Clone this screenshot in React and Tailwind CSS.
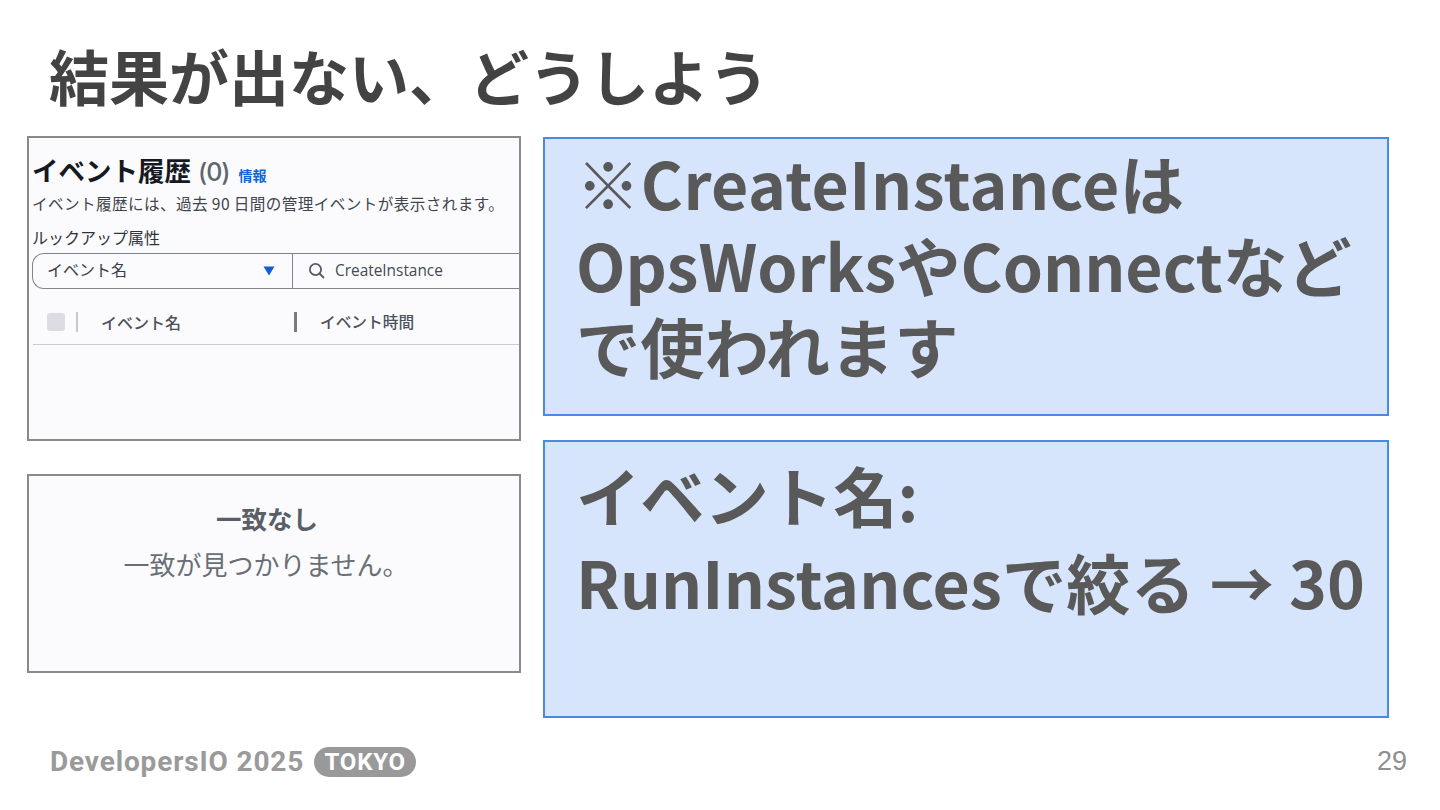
import React from 'react'

const jp = "font-['Noto_Sans_CJK_JP','Noto_Sans',sans-serif]"

const Triangle = () => (
  <svg width="12" height="10" viewBox="0 0 12 10" className="shrink-0">
    <path d="M0.5 0.5 H11.5 L6 9.5 Z" fill="#0e5fd0" />
  </svg>
)

const Search = () => (
  <svg width="18" height="18" viewBox="0 0 18 18" fill="none" stroke="#545b64" strokeWidth="1.8" className="shrink-0">
    <circle cx="7.5" cy="7.5" r="5.6" />
    <path d="M11.5 11.5 L16 16" />
  </svg>
)

const History = () => (
  <div className={`h-[305px] border-2 border-[#8a8a8a] bg-[#fbfbfe] pl-[3px] pt-[14px] overflow-hidden ${jp}`}>
    <div className="flex items-baseline h-[36px]">
      <span className="text-[26.5px] leading-[36px] font-bold text-[#16191f]">イベント履歴</span>
      <span className="ml-[7px] text-[25px] leading-[36px] font-medium text-[#5f6670] font-['Inter',sans-serif] tracking-[-1px]">(0)</span>
      <span className="ml-[9px] text-[14px] leading-[36px] font-bold text-[#1166d6]">情報</span>
    </div>
    <p className="mt-[4px] h-[22px] text-[15.6px] tracking-[0.4px] leading-[22px] text-[#3f444c] whitespace-nowrap">イベント履歴には、過去 90 日間の管理イベントが表示されます。</p>
    <p className="mt-[13px] h-[21px] text-[16px] leading-[21px] text-[#30343a]">ルックアップ属性</p>
    <div className="mt-[5px] flex h-[36px] border-y border-l border-[#7d848c] rounded-l-[12px] text-[#3a3f46]">
      <div className="w-[260px] flex items-center justify-between pl-[14px] pr-[17px] border-r border-[#7d848c]">
        <span className="text-[16px] pb-[5px]">イベント名</span>
        <Triangle />
      </div>
      <div className="flex items-center pl-[15px] gap-[9px]">
        <Search />
        <span className="text-[15.4px] font-['Open_Sans',sans-serif] text-[#444a52]">CreateInstance</span>
      </div>
    </div>
    <div className="mt-[14px] flex items-center h-[42px] border-b border-[#c9ccd1] ml-[1px] pb-[3px] text-[#4c5159] font-medium">
      <span className="ml-[14px] w-[18px] h-[18px] rounded-[3px] bg-[#dcdde3]" />
      <span className="ml-[11px] w-[2px] h-[20px] bg-[#c6c8cc]" />
      <span className="ml-[23px] w-[193px] text-[16px]">イベント名</span>
      <span className="w-[3px] h-[20px] bg-[#777c84]" />
      <span className="ml-[23px] text-[15.7px]">イベント時間</span>
    </div>
  </div>
)

const NoMatch = () => (
  <div className={`mt-[33px] h-[199px] border-2 border-[#8a8a8a] bg-[#fbfbfe] flex flex-col items-center pt-[25px] ${jp}`}>
    <p className="mr-[14px] text-[25.5px] leading-[34px] font-bold text-[#5a5e66]">一致なし</p>
    <p className="mt-[12px] mr-[16px] text-[26px] leading-[34px] text-[#6a6e75]">一致が見つかりません。</p>
  </div>
)

const Note = ({ className, children }) => (
  <div className={`border-2 border-[#4a8ae0] bg-[#d6e5fb] pl-[31px] font-bold text-[#595959] text-[64.3px] whitespace-nowrap ${jp} ${className}`}>
    {children}
  </div>
)

const App = () => {
  return (
    <div className="relative w-[1440px] h-[810px] bg-white overflow-hidden">
      <h1 className={`h-[136px] pl-[49px] pt-[30px] text-[60px] leading-[90px] font-bold text-[#434343] ${jp}`}>結果が出ない、どうしよう</h1>

      <div className="flex pl-[27px] items-start">
        <div className="w-[494px]">
          <History />
          <NoMatch />
        </div>
        <div className="ml-[22px] mt-[1px] w-[846px]">
          <Note className="h-[279px] leading-[81.5px] pt-[3px]">
            <p className="tracking-[0.45px]">※CreateInstanceは</p>
            <p>OpsWorksやConnectなど</p>
            <p>で使われます</p>
          </Note>
          <Note className="mt-[24px] h-[278px] leading-[87px] pt-[9px]">
            <p>イベント名:</p>
            <p className="tracking-[0.1px]">RunInstancesで絞る → 30</p>
          </Note>
        </div>
      </div>

      <div className="absolute left-[50px] top-[746px] flex items-center gap-[10px] text-[#9a9a9a] font-bold font-['Roboto',sans-serif]">
        <span className="text-[28px] leading-[32px] tracking-[0.85px] whitespace-nowrap">DevelopersIO 2025</span>
        <span className="h-[30px] w-[102px] rounded-full bg-[#999999] text-white text-[24px] leading-[30px] text-center tracking-[0.8px]">TOKYO</span>
      </div>
      <span className="absolute left-[1377px] top-[745px] text-[27px] leading-[32px] text-[#8f8f8f] font-['Liberation_Sans',sans-serif]">29</span>
    </div>
  )
}

export default App
